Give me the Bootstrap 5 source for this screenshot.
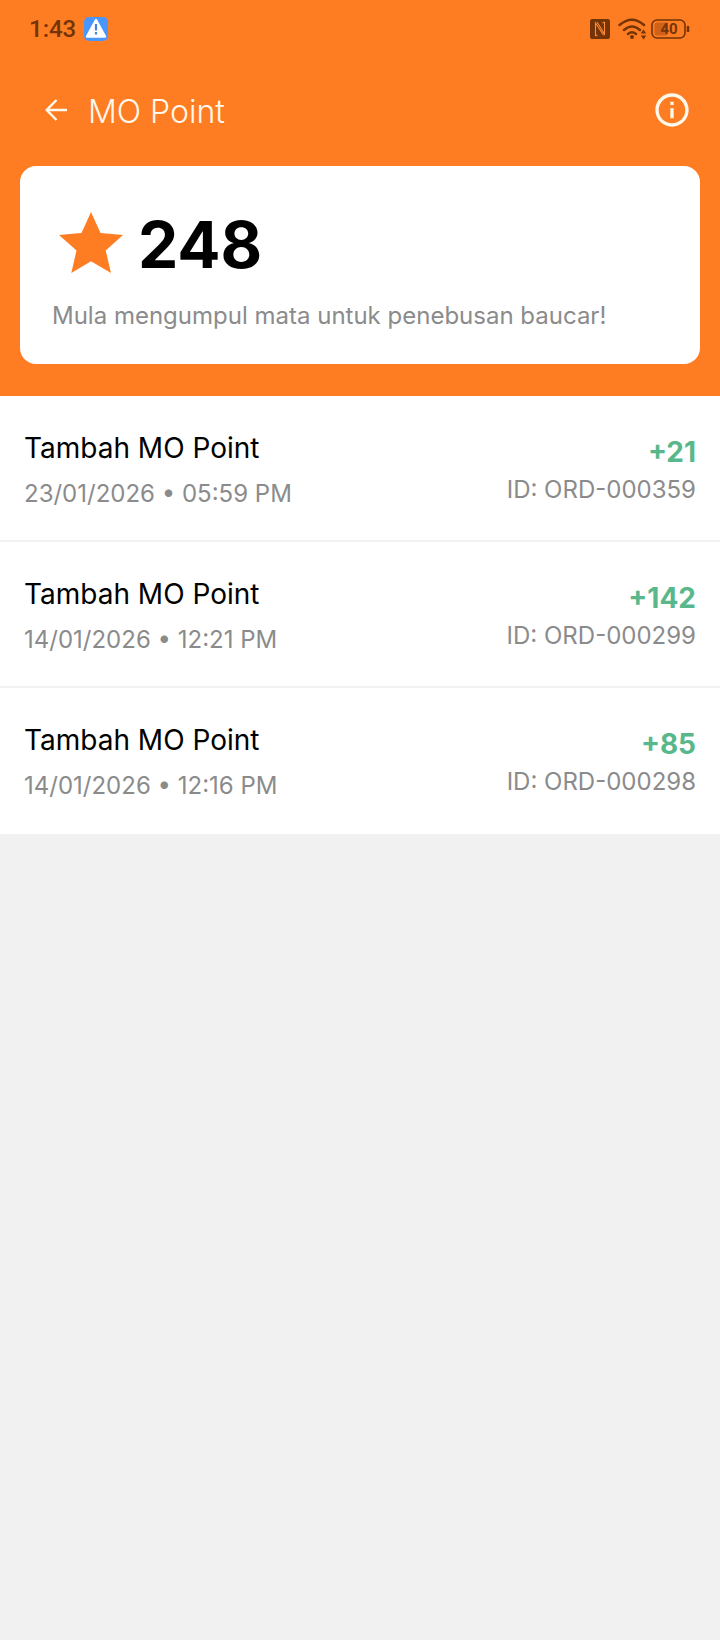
<!DOCTYPE html>
<html lang="ms">
<head>
<meta charset="utf-8">
<meta name="viewport" content="width=device-width, initial-scale=1">
<title>MO Point</title>
<link href="https://cdn.jsdelivr.net/npm/bootstrap@5.3.0/dist/css/bootstrap.min.css" rel="stylesheet">
<style>
  :root { --brand: #ff7d22; --ink: #743407; --muted: #8b8b8b; --gain: #59b88b; --line: #f1f1f1; }
  body { font-family: Inter, "Liberation Sans", sans-serif; background: var(--line); color: #000; }
  svg { display: block; flex: none; }
  .hero { background: var(--brand); padding: 0 20px 32px; }
  .statusbar { height: 58px; padding: 0 10px 0 9px; color: var(--ink); font: 500 24px/32px Roboto, sans-serif; }
  .appbar { height: 108px; padding: 0 8px 4px 16px; color: #fff8ec; }
  .appbar h1 { font-size: 32px; line-height: 40px; font-weight: 300; padding-top: 3px; }
  .icon-btn { color: inherit; text-decoration: none; background: none; border: 0; padding: 0; }
  .points { border: 0; border-radius: 16px; padding: 40px 32px 32px; }
  .total { font-size: 64px; line-height: 78px; font-weight: 700; }
  .note, .meta { font-size: 24px; line-height: 32px; font-weight: 400; color: var(--muted); }
  .history > li { padding: 32px 24px 30px; border-bottom: 2px solid var(--line); background: #fff; }
  .history > li:last-child { border-bottom-color: #fff; }
  .entry { font-size: 28px; line-height: 40px; font-weight: 400; margin-bottom: 10px; }
  .gain { font-size: 28px; line-height: 36px; font-weight: 700; color: var(--gain); padding-top: 2px; }
</style>
</head>
<body>
<header class="hero">
  <div class="statusbar d-flex align-items-center justify-content-between">
    <div class="d-flex align-items-center gap-2">
      <span>1:43</span>
      <svg width="24" height="24" viewBox="0 0 24 24" aria-hidden="true"><rect width="24" height="24" rx="5" fill="#4a96ff"/><path d="M12 3 21 19.500H3Z" fill="#fff" stroke="#fff" stroke-width="2.400" stroke-linejoin="round"/><path d="M12 7v6.500M12 15v2.500" stroke="#4a82d8" stroke-width="2.200"/></svg>
    </div>
    <div class="d-flex align-items-center">
      <svg class="me-2" width="20" height="20" viewBox="0 0 20 20" fill="none" aria-hidden="true"><rect width="20" height="20" rx="2" fill="#743407"/><path d="M5.500 17V4L13.500 16M7 3 14.500 15V3M5.500 17 7.500 16M14.500 3 12.500 4" stroke="#ff8a38" stroke-width="1.100"/></svg>
      <svg class="me-1" width="29" height="22" viewBox="0 0 29 22" fill="none" stroke="#743407" aria-hidden="true"><path d="M1.500 7Q14 -3.500 26 7M6 12Q14 5 22 12M10 16Q14 12.500 18 16" stroke-width="2.500" stroke-linecap="round"/><circle cx="14" cy="19" r="2" fill="#743407" stroke="none"/><path d="M25.500 11.500 28.200 15.500H22.800ZM25.500 21.500 28.200 17.500H22.800Z" fill="#743407" stroke="none"/></svg>
      <svg width="39" height="20" viewBox="0 0 39 20" role="img" aria-label="40%"><rect x="1" y="1" width="33" height="18" rx="5" fill="none" stroke="#743407" stroke-width="1.600"/><path d="M16 3.500H6A2.500 2.500 0 0 0 3.500 6v8A2.500 2.500 0 0 0 6 16.500H16Z" fill="#d06218"/><path d="M37 7v6" stroke="#743407" stroke-width="2.500"/><text x="18" y="15" text-anchor="middle" font-family="Roboto" font-weight="700" font-size="15" fill="#743407">40</text></svg>
    </div>
  </div>
  <nav class="appbar d-flex align-items-center">
    <a href="#" class="icon-btn" aria-label="Kembali"><svg width="40" height="40" viewBox="0 0 40 40" fill="none" stroke="currentColor" stroke-width="2.400"><path d="M31 20H11M20.500 10 10.700 20l9.800 10"/></svg></a>
    <h1 class="mb-0 ms-2 ps-1 flex-grow-1">MO Point</h1>
    <button type="button" class="icon-btn" aria-label="Maklumat"><svg width="40" height="40" viewBox="0 0 24 24" fill="currentColor"><path d="M11 7h2v2h-2zm0 4h2v6h-2zm1-9C6.480 2 2 6.480 2 12s4.480 10 10 10 10-4.480 10-10S17.520 2 12 2zm0 18c-4.410 0-8-3.590-8-8s3.590-8 8-8 8 3.590 8 8-3.590 8-8 8z"/></svg></button>
  </nav>
  <section class="card points">
    <div class="d-flex align-items-start gap-2">
      <svg width="78" height="76" viewBox="0 0 78 76" fill="#ff7d22" aria-hidden="true"><path d="M39 6 48.500 27 71 29 53.700 44.500 59 67 39 55.300 19.300 67 24.500 44.500 7 29 29.500 27Z"/></svg>
      <span class="total">248</span>
    </div>
    <p class="note mb-0 mt-3">Mula mengumpul mata untuk penebusan baucar!</p>
  </section>
</header>
<main>
  <ul class="history list-unstyled mb-0">
    <li class="d-flex justify-content-between align-items-center">
      <div><div class="entry">Tambah MO Point</div><div class="meta">23/01/2026 • 05:59 PM</div></div>
      <div class="text-end"><div class="gain mb-1">+21</div><div class="meta">ID: ORD-000359</div></div>
    </li>
    <li class="d-flex justify-content-between align-items-center">
      <div><div class="entry">Tambah MO Point</div><div class="meta">14/01/2026 • 12:21 PM</div></div>
      <div class="text-end"><div class="gain mb-1">+142</div><div class="meta">ID: ORD-000299</div></div>
    </li>
    <li class="d-flex justify-content-between align-items-center">
      <div><div class="entry">Tambah MO Point</div><div class="meta">14/01/2026 • 12:16 PM</div></div>
      <div class="text-end"><div class="gain mb-1">+85</div><div class="meta">ID: ORD-000298</div></div>
    </li>
  </ul>
</main>
<script src="https://cdn.jsdelivr.net/npm/bootstrap@5.3.0/dist/js/bootstrap.bundle.min.js"></script>
</body>
</html>
